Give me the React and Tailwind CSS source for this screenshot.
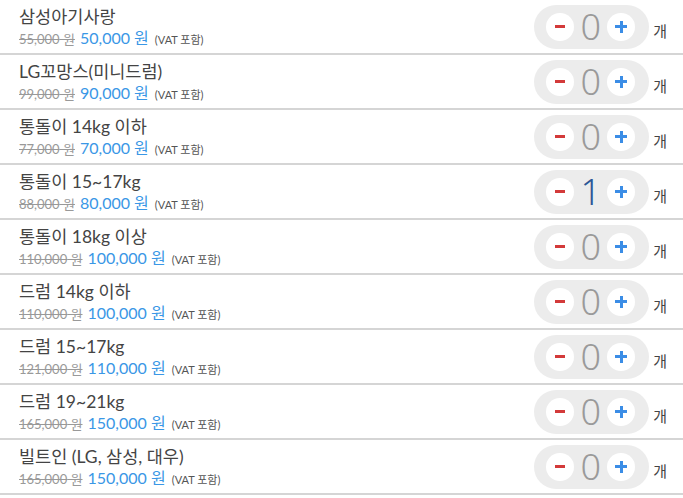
import React, { useState } from 'react';

const items = [
  { name: '삼성아기사랑', old: '55,000', price: '50,000', qty: 0 },
  { name: 'LG꼬망스(미니드럼)', old: '99,000', price: '90,000', qty: 0 },
  { name: '통돌이 14kg 이하', old: '77,000', price: '70,000', qty: 0 },
  { name: '통돌이 15~17kg', old: '88,000', price: '80,000', qty: 1 },
  { name: '통돌이 18kg 이상', old: '110,000', price: '100,000', qty: 0 },
  { name: '드럼 14kg 이하', old: '110,000', price: '100,000', qty: 0 },
  { name: '드럼 15~17kg', old: '121,000', price: '110,000', qty: 0 },
  { name: '드럼 19~21kg', old: '165,000', price: '150,000', qty: 0 },
  { name: '빌트인 (LG, 삼성, 대우)', old: '165,000', price: '150,000', qty: 0 },
];

function Counter({ value, onMinus, onPlus }) {
  return (
    <div className="flex items-center h-[44px] w-[115px] rounded-full bg-[#ececec] pl-[12px] pr-[14px]">
      <button onClick={onMinus} className="w-[28px] h-[28px] rounded-full bg-white flex items-center justify-center">
        <span className="block w-[10px] h-[3px] bg-[#d33a3a]" />
      </button>
      <span className={`flex-1 text-center text-[36px] leading-none font-light font-['Noto_Sans',sans-serif] ${value > 0 ? 'text-[#2c5796]' : 'text-[#9a9a9a]'}`}>{value}</span>
      <button onClick={onPlus} className="w-[28px] h-[28px] rounded-full bg-white flex items-center justify-center relative">
        <span className="absolute w-[12px] h-[3px] bg-[#3b8de6]" />
        <span className="absolute w-[3px] h-[12px] bg-[#3b8de6]" />
      </button>
    </div>
  );
}

export default function App() {
  const [qtys, setQtys] = useState(items.map((i) => i.qty));

  const change = (idx, d) => setQtys((q) => q.map((v, i) => (i === idx ? Math.max(0, v + d) : v)));

  return (
    <div className="w-[683px] h-[498px] overflow-hidden bg-white font-['Lato','Noto_Sans_CJK_KR',sans-serif]">
      {items.map((item, idx) => (
        <div key={item.name} className="flex items-center justify-between h-[55px] border-b-2 border-[#d5d5d5] pl-[19px] pr-[16px]">
          <div className="flex flex-col pt-[3px]">
            <div className="text-[17.5px] leading-[20px] text-[#444]">{item.name}</div>
            <div className="flex items-baseline leading-[20px] mt-[1px]">
              <span className="text-[13px] text-[#999] line-through decoration-[#999]">{item.old} 원</span>
              <span className="text-[16px] text-[#3a97e6] ml-[5px]">{item.price} 원</span>
              <span className="text-[11px] text-[#555] ml-[6px]">(VAT 포함)</span>
            </div>
          </div>
          <div className="flex items-center">
            <Counter value={qtys[idx]} onMinus={() => change(idx, -1)} onPlus={() => change(idx, 1)} />
            <span className="text-[15px] text-[#444] ml-[4px] mt-[10px]">개</span>
          </div>
        </div>
      ))}
    </div>
  );
}
